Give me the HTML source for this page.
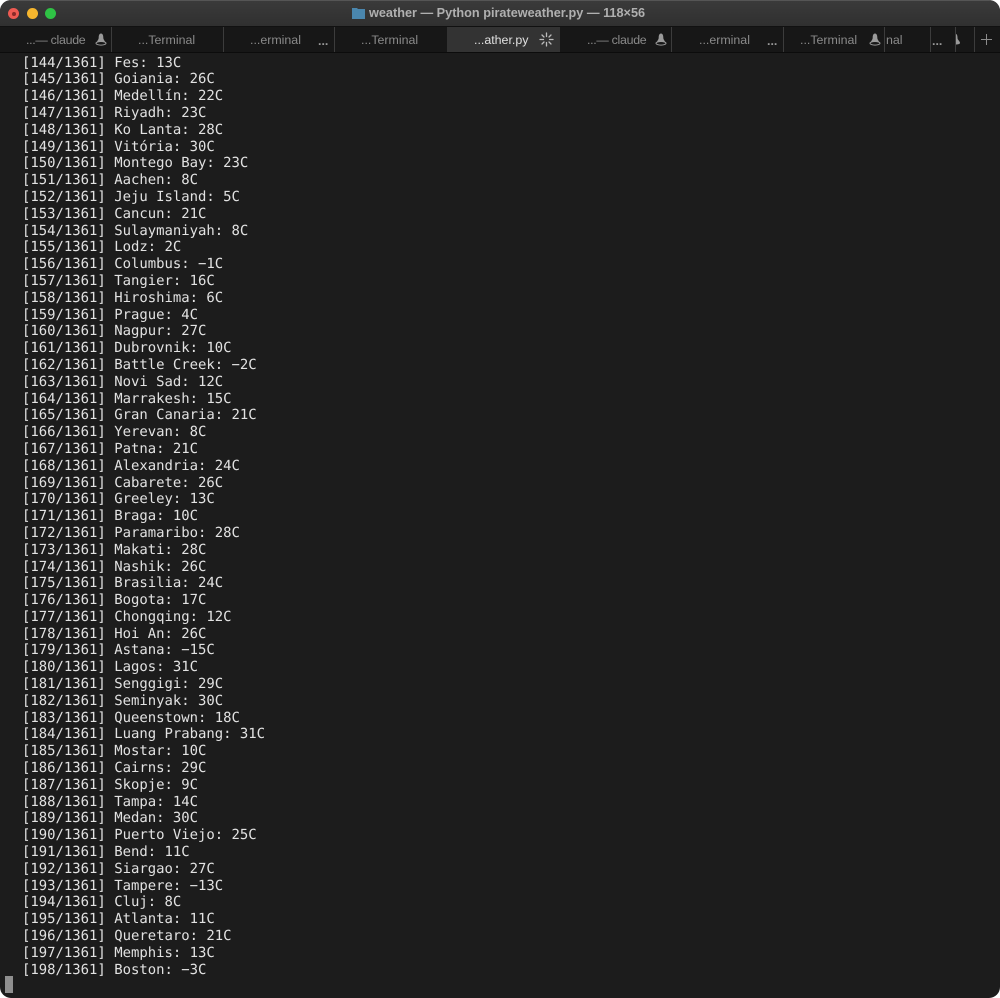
<!DOCTYPE html>
<html><head><meta charset="utf-8"><style>
html,body{margin:0;padding:0;background:#fff;width:1000px;height:998px;overflow:hidden}
#win{position:absolute;left:0;top:0;width:1000px;height:998px;background:#1c1c1c;border-radius:11px;overflow:hidden}
#title{position:absolute;left:0;top:0;width:1000px;height:26px;background:linear-gradient(#3a3a3a,#303030);border-top:1px solid #555;box-sizing:border-box}
.dot{position:absolute;top:6.500px;width:11.500px;height:11.500px;border-radius:50%}
#t{position:absolute;left:369px;top:3px;font:bold 12.700px/18px "Liberation Sans",sans-serif;color:#b0b0b0;white-space:nowrap}
#tabs{position:absolute;left:0;top:26px;width:1000px;height:27px;background:#171717;border-top:1px solid #111;border-bottom:1px solid #0c0c0c;box-sizing:border-box}
.tl{position:absolute;top:4.500px;font:12.400px/17px "Liberation Sans",sans-serif;color:#8a8a8a;white-space:nowrap}
.e{top:6px;font-weight:bold;color:#999}
.s{position:absolute;top:0;width:1px;height:25px;background:#3c3c3c}
svg{position:absolute}
pre{position:absolute;left:22px;top:54.600px;margin:0;font:13.930px/16.800px "DejaVu Sans Mono","Liberation Mono",monospace;color:#e2e2e2;text-rendering:geometricPrecision}
</style></head><body><div id="win">
<div id="title">
<div class="dot" style="left:7.500px;background:#ee5a52"></div>
<div style="position:absolute;left:11.500px;top:10.500px;width:4px;height:4px;border-radius:50%;background:#8a2a28"></div>
<div class="dot" style="left:26.500px;background:#f6b62e"></div>
<div class="dot" style="left:44.500px;background:#2fc245"></div>
<svg style="left:351px;top:5px" width="15" height="14" viewBox="0 0 15 14"><path d="M1 2h5l1 1h7v10H1z" fill="#4a86ad"/></svg>
<div id="t">weather — Python pirateweather.py — 118×56</div>
</div>
<div id="tabs">
<div style="position:absolute;left:447px;top:0;width:113px;height:25px;background:#333"></div>
<div class="tl" style="left:26px;letter-spacing:-.3px">...— claude</div>
<div class="tl" style="left:138px">...Terminal</div>
<div class="tl" style="left:250px">...erminal</div>
<div class="tl" style="left:361px">...Terminal</div>
<div class="tl" style="left:474px;color:#e0e0e0">...ather.py</div>
<div class="tl" style="left:587px;letter-spacing:-.3px">...— claude</div>
<div class="tl" style="left:699px">...erminal</div>
<div class="tl" style="left:800px">...Terminal</div>
<div class="tl" style="left:886px">nal</div>
<div class="tl e" style="left:318px">...</div>
<div class="tl e" style="left:767px">...</div>
<div class="tl e" style="left:932px">...</div>
<div class="s" style="left:111px"></div><div class="s" style="left:223px"></div><div class="s" style="left:334px"></div>
<div class="s" style="left:671px"></div><div class="s" style="left:783px"></div><div class="s" style="left:884px"></div><div class="s" style="left:930px"></div><div class="s" style="left:955px"></div><div class="s" style="left:974px"></div>
<svg style="left:95px;top:6px" width="12" height="13" viewBox="0 0 12 13"><path d="M6 .5C4.300.5 3.700 2.500 3.700 4.500S2.500 7.500 1.800 8.800h8.400C9.500 7.500 8.300 6.500 8.300 4.500S7.700.5 6 .5z" fill="#9a9a9a"/><ellipse cx="6" cy="10.300" rx="5" ry="1.800" fill="none" stroke="#9a9a9a"/></svg>
<svg style="left:655px;top:6px" width="12" height="13" viewBox="0 0 12 13"><path d="M6 .5C4.300.5 3.700 2.500 3.700 4.500S2.500 7.500 1.800 8.800h8.400C9.500 7.500 8.300 6.500 8.300 4.500S7.700.5 6 .5z" fill="#9a9a9a"/><ellipse cx="6" cy="10.300" rx="5" ry="1.800" fill="none" stroke="#9a9a9a"/></svg>
<svg style="left:869px;top:6px" width="12" height="13" viewBox="0 0 12 13"><path d="M6 .5C4.300.5 3.700 2.500 3.700 4.500S2.500 7.500 1.800 8.800h8.400C9.500 7.500 8.300 6.500 8.300 4.500S7.700.5 6 .5z" fill="#9a9a9a"/><ellipse cx="6" cy="10.300" rx="5" ry="1.800" fill="none" stroke="#9a9a9a"/></svg>
<svg style="left:956px;top:6px" width="5" height="13" viewBox="0 0 5 13"><path d="M0 1C1 1 1.500 3 1.500 5S4 8 4 10C4 11 2 11.500 0 11.500z" fill="#9a9a9a"/></svg>
<svg style="left:539px;top:5px" width="15" height="15" viewBox="0 0 15 15" stroke="#bbb" stroke-width="1.300" stroke-linecap="round"><path d="M7.500 1v3.500M12 3 10 5M14 7.500h-3.500M12 12l-2-2M7.500 14v-3.500M3 12l2-2M1 7.500h3.500M3 3l2 2"/></svg>
<svg style="left:981px;top:7px" width="11" height="11" viewBox="0 0 11 11" stroke="#8c8c8c" stroke-width="1"><path d="M5.500 0v11M0 5.500h11"/></svg>
</div>
<pre>[144/1361] Fes: 13C
[145/1361] Goiania: 26C
[146/1361] Medellín: 22C
[147/1361] Riyadh: 23C
[148/1361] Ko Lanta: 28C
[149/1361] Vitória: 30C
[150/1361] Montego Bay: 23C
[151/1361] Aachen: 8C
[152/1361] Jeju Island: 5C
[153/1361] Cancun: 21C
[154/1361] Sulaymaniyah: 8C
[155/1361] Lodz: 2C
[156/1361] Columbus: −1C
[157/1361] Tangier: 16C
[158/1361] Hiroshima: 6C
[159/1361] Prague: 4C
[160/1361] Nagpur: 27C
[161/1361] Dubrovnik: 10C
[162/1361] Battle Creek: −2C
[163/1361] Novi Sad: 12C
[164/1361] Marrakesh: 15C
[165/1361] Gran Canaria: 21C
[166/1361] Yerevan: 8C
[167/1361] Patna: 21C
[168/1361] Alexandria: 24C
[169/1361] Cabarete: 26C
[170/1361] Greeley: 13C
[171/1361] Braga: 10C
[172/1361] Paramaribo: 28C
[173/1361] Makati: 28C
[174/1361] Nashik: 26C
[175/1361] Brasilia: 24C
[176/1361] Bogota: 17C
[177/1361] Chongqing: 12C
[178/1361] Hoi An: 26C
[179/1361] Astana: −15C
[180/1361] Lagos: 31C
[181/1361] Senggigi: 29C
[182/1361] Seminyak: 30C
[183/1361] Queenstown: 18C
[184/1361] Luang Prabang: 31C
[185/1361] Mostar: 10C
[186/1361] Cairns: 29C
[187/1361] Skopje: 9C
[188/1361] Tampa: 14C
[189/1361] Medan: 30C
[190/1361] Puerto Viejo: 25C
[191/1361] Bend: 11C
[192/1361] Siargao: 27C
[193/1361] Tampere: −13C
[194/1361] Cluj: 8C
[195/1361] Atlanta: 11C
[196/1361] Queretaro: 21C
[197/1361] Memphis: 13C
[198/1361] Boston: −3C</pre>
<div style="position:absolute;left:5px;top:976px;width:8px;height:17px;background:#8f8f8f"></div>
</div></body></html>
